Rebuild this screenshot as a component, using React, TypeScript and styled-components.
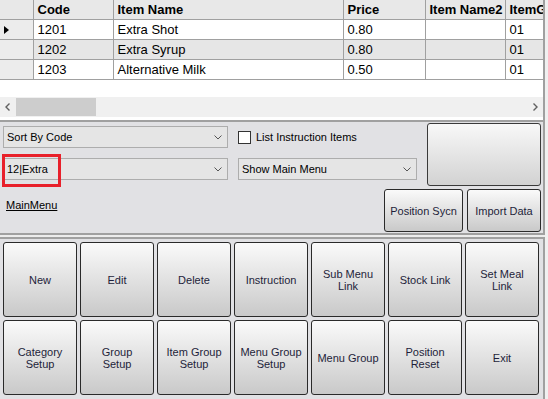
import React from 'react';
import styled, { createGlobalStyle } from 'styled-components';

const GlobalStyle = createGlobalStyle`
  html, body {
    margin: 0;
    padding: 0;
    background: #f0f0f0;
    overflow: hidden;
  }
  body {
    font-family: "Liberation Sans", Arial, sans-serif;
  }
`;

const Window = styled.div`
  width: 545px;
  height: 399px;
  display: flex;
  flex-direction: column;
`;

/* ---------- data grid ---------- */

const GridBox = styled.div`
  height: 120px;
  box-sizing: border-box;
  background: #fff;
  border-right: 2px solid #a0a0a0;
  display: flex;
  flex-direction: column;
  overflow: hidden;
`;

const TableArea = styled.div`
  height: 97px;
  overflow: hidden;
`;

const Table = styled.table`
  border-collapse: collapse;
  table-layout: fixed;
  width: 585px;
  font-size: 13px;
  color: #000;
`;

const HeadCell = styled.th`
  height: 19px;
  padding: 0 0 0 4px;
  text-align: left;
  font-weight: bold;
  background: #e8e8e8;
  border: 1px solid #a0a0a0;
  border-top: none;
  white-space: nowrap;
  overflow: hidden;
  &:first-child { border-left: none; }
`;

const Cell = styled.td<{ $alt?: boolean }>`
  height: 19px;
  padding: 0 0 0 4px;
  background: ${({ $alt }) => ($alt ? '#e6e6e6' : '#fff')};
  border: 1px solid #a0a0a0;
  white-space: nowrap;
  overflow: hidden;
`;

const RowHeader = styled.td`
  height: 19px;
  padding: 0 0 0 4px;
  background: #ececec;
  border: 1px solid #a0a0a0;
  border-left: none;
`;

const CurrentMark = styled.span`
  display: block;
  width: 0;
  height: 0;
  border-left: 5px solid #000;
  border-top: 4px solid transparent;
  border-bottom: 4px solid transparent;
`;

const HScroll = styled.div`
  height: 20px;
  background: #f0f0f0;
  display: flex;
  align-items: center;
`;

const ScrollArrow = styled.div`
  width: 16px;
  height: 20px;
  display: flex;
  align-items: center;
  justify-content: center;
`;

const ScrollThumb = styled.div`
  width: 80px;
  height: 18px;
  background: #cdcdcd;
`;

const ScrollTrack = styled.div`
  flex: 1;
`;

/* ---------- control panel ---------- */

const ControlPanel = styled.div`
  height: 115px;
  box-sizing: border-box;
  background: #e1e1e4;
  border-top: 2px solid #a0a0a0;
  border-bottom: 2px solid #a0a0a0;
  border-right: 2px solid #a0a0a0;
  padding: 1px 2px 0 3px;
  display: flex;
  flex-direction: column;
  gap: 3px;
`;

const TopRow = styled.div`
  display: flex;
  height: 63px;
`;

const BottomRow = styled.div`
  display: flex;
  height: 43px;
`;

const FieldCol = styled.div<{ $w: number }>`
  width: ${({ $w }) => $w}px;
  flex-shrink: 0;
  padding-top: 3px;
  margin-right: 10px;
  display: flex;
  flex-direction: column;
  gap: 10px;
`;

const ButtonPair = styled.div`
  margin-left: auto;
  display: flex;
  gap: 4px;
`;

const Combo = styled.div`
  height: 22px;
  box-sizing: border-box;
  border: 1px solid #adadad;
  background: #e5e5e5;
  display: flex;
  align-items: center;
  justify-content: space-between;
  padding: 0 5px 0 3px;
  font-size: 11px;
  color: #000;
  position: relative;
`;

const Highlight = styled.div`
  position: absolute;
  left: -2px;
  top: -5px;
  width: 59px;
  height: 33px;
  box-sizing: border-box;
  border: 3px solid #e8202a;
`;

const CheckRow = styled.label`
  height: 22px;
  display: flex;
  align-items: center;
  gap: 5px;
  font-size: 11px;
  color: #000;
`;

const CheckBox = styled.span`
  width: 13px;
  height: 13px;
  box-sizing: border-box;
  border: 1px solid #333;
  background: #fff;
`;

const MenuLink = styled.a`
  margin-top: 10px;
  padding-left: 3px;
  font-size: 11px;
  line-height: 13px;
  height: 13px;
  color: #000;
  text-decoration: underline;
`;

const PanelButton = styled.button<{ $w: number; $h: number }>`
  width: ${({ $w }) => $w}px;
  height: ${({ $h }) => $h}px;
  flex-shrink: 0;
  box-sizing: border-box;
  padding: 0 2px;
  border: 1px solid #2a2a2a;
  border-radius: 3px;
  background: linear-gradient(to bottom, #fafafa, #c9c9c9);
  font-family: "Liberation Sans", Arial, sans-serif;
  font-size: 11px;
  line-height: 12px;
  color: #1e1e3a;
`;

const BigButton = styled(PanelButton)`
  margin-left: auto;
  background: linear-gradient(to bottom, #f8f8f8, #d2d2d2);
  border-color: #3a3a3a;
`;

/* ---------- command buttons ---------- */

const Splitter = styled.div`
  height: 2px;
  background: #ececec;
`;

const ButtonPanel = styled.div`
  flex: 1;
  background: #e1e1e4;
  border-top: 2px solid #a0a0a0;
  border-right: 2px solid #a0a0a0;
  padding: 3px 4px 0 3px;
  display: grid;
  grid-template-columns: repeat(7, 74px);
  grid-auto-rows: 75px;
  gap: 3px;
  align-content: start;
`;

const Chevron = ({ dir }: { dir: 'down' | 'left' | 'right' }) => {
  if (dir === 'down') {
    return (
      <svg width="8" height="5" viewBox="0 0 8 5">
        <polyline points="0.5,0.5 4,4 7.5,0.5" fill="none" stroke="#555" strokeWidth="1" />
      </svg>
    );
  }
  const pts = dir === 'left' ? '4.5,0.5 1,4 4.5,7.5' : '1.5,0.5 5,4 1.5,7.5';
  return (
    <svg width="6" height="8" viewBox="0 0 6 8">
      <polyline points={pts} fill="none" stroke="#606060" strokeWidth="1.4" />
    </svg>
  );
};

const rows = [
  { code: '1201', name: 'Extra Shot', price: '0.80', name2: '', group: '01' },
  { code: '1202', name: 'Extra Syrup', price: '0.80', name2: '', group: '01' },
  { code: '1203', name: 'Alternative Milk', price: '0.50', name2: '', group: '01' },
];

const commands = [
  ['New'],
  ['Edit'],
  ['Delete'],
  ['Instruction'],
  ['Sub Menu', 'Link'],
  ['Stock Link'],
  ['Set Meal', 'Link'],
  ['Category', 'Setup'],
  ['Group', 'Setup'],
  ['Item Group', 'Setup'],
  ['Menu Group', 'Setup'],
  ['Menu Group'],
  ['Position', 'Reset'],
  ['Exit'],
];

export default function App() {
  return (
    <Window>
      <GlobalStyle />
      <GridBox>
        <TableArea>
          <Table>
            <colgroup>
              <col style={{ width: 33 }} />
              <col style={{ width: 80 }} />
              <col style={{ width: 230 }} />
              <col style={{ width: 82 }} />
              <col style={{ width: 80 }} />
              <col style={{ width: 80 }} />
            </colgroup>
            <thead>
              <tr>
                <HeadCell />
                <HeadCell>Code</HeadCell>
                <HeadCell>Item Name</HeadCell>
                <HeadCell>Price</HeadCell>
                <HeadCell>Item Name2</HeadCell>
                <HeadCell>ItemG</HeadCell>
              </tr>
            </thead>
            <tbody>
              {rows.map((r, i) => (
                <tr key={r.code}>
                  <RowHeader>{i === 0 && <CurrentMark />}</RowHeader>
                  <Cell $alt={i === 1}>{r.code}</Cell>
                  <Cell $alt={i === 1}>{r.name}</Cell>
                  <Cell $alt={i === 1}>{r.price}</Cell>
                  <Cell $alt={i === 1}>{r.name2}</Cell>
                  <Cell $alt={i === 1}>{r.group}</Cell>
                </tr>
              ))}
            </tbody>
          </Table>
        </TableArea>
        <HScroll>
          <ScrollArrow>
            <Chevron dir="left" />
          </ScrollArrow>
          <ScrollThumb />
          <ScrollTrack />
          <ScrollArrow>
            <Chevron dir="right" />
          </ScrollArrow>
        </HScroll>
      </GridBox>

      <ControlPanel>
        <TopRow>
          <FieldCol $w={225}>
            <Combo>
              <span>Sort By Code</span>
              <Chevron dir="down" />
            </Combo>
            <Combo>
              <span>12|Extra</span>
              <Chevron dir="down" />
              <Highlight />
            </Combo>
          </FieldCol>
          <FieldCol $w={179}>
            <CheckRow>
              <CheckBox />
              List Instruction Items
            </CheckRow>
            <Combo>
              <span>Show Main Menu</span>
              <Chevron dir="down" />
            </Combo>
          </FieldCol>
          <BigButton $w={114} $h={63} />
        </TopRow>
        <BottomRow>
          <MenuLink>MainMenu</MenuLink>
          <ButtonPair>
            <PanelButton $w={79} $h={43}>Position Sycn</PanelButton>
            <PanelButton $w={74} $h={43}>Import Data</PanelButton>
          </ButtonPair>
        </BottomRow>
      </ControlPanel>

      <Splitter />

      <ButtonPanel>
        {commands.map((lines) => (
          <PanelButton key={lines.join(' ')} $w={74} $h={75}>
            {lines.map((l, i) => (
              <React.Fragment key={l}>
                {i > 0 && <br />}
                {l}
              </React.Fragment>
            ))}
          </PanelButton>
        ))}
      </ButtonPanel>
    </Window>
  );
}
